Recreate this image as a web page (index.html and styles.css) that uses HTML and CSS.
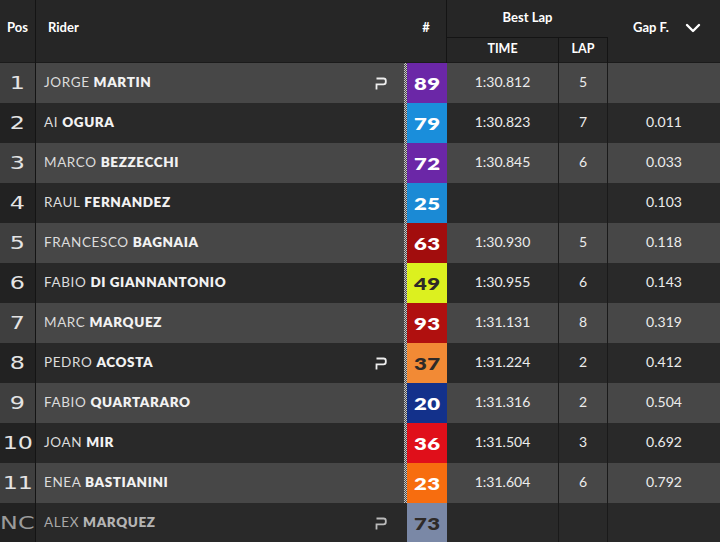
FILE: index.html
```html
<!DOCTYPE html>
<html>
<head>
<meta charset="utf-8">
<link rel="stylesheet" href="styles.css">
</head>
<body>
<div class="board">
  <div class="head">
    <div class="h-pos">Pos</div>
    <div class="h-rider">Rider</div>
    <div class="h-num">#</div>
    <div class="h-best">Best Lap</div>
    <div class="h-time">TIME</div>
    <div class="h-lap">LAP</div>
    <div class="h-gap">Gap F.
      <svg class="chev" width="16" height="10" viewBox="0 0 16 10"><path d="M2 2 L8 8 L14 2" fill="none" stroke="#fff" stroke-width="2.4" stroke-linecap="round" stroke-linejoin="round"/></svg>
    </div>
  </div>

  <div class="row light">
    <div class="pos"><span>1</span></div>
    <div class="rider">JORGE <b>MARTIN</b><svg class="pflag" width="12" height="13" viewBox="0 0 12 13"><path d="M1.5 1.5 H8.5 Q10.8 1.5 10.8 3.8 V5 Q10.8 7.3 8.5 7.3 H1.5 V12.5" fill="none" stroke="#eee" stroke-width="1.8"/></svg></div>
    <div class="chk"></div>
    <div class="num" style="background:#6b27a7"><span>89</span></div>
    <div class="time">1:30.812</div>
    <div class="lap">5</div>
    <div class="gap"></div>
  </div>
  <div class="row dark">
    <div class="pos"><span>2</span></div>
    <div class="rider">AI <b>OGURA</b></div>
    <div class="chk"></div>
    <div class="num" style="background:#1a8edb"><span>79</span></div>
    <div class="time">1:30.823</div>
    <div class="lap">7</div>
    <div class="gap">0.011</div>
  </div>
  <div class="row light">
    <div class="pos"><span>3</span></div>
    <div class="rider">MARCO <b>BEZZECCHI</b></div>
    <div class="chk"></div>
    <div class="num" style="background:#6b27a7"><span>72</span></div>
    <div class="time">1:30.845</div>
    <div class="lap">6</div>
    <div class="gap">0.033</div>
  </div>
  <div class="row dark">
    <div class="pos"><span>4</span></div>
    <div class="rider">RAUL <b>FERNANDEZ</b></div>
    <div class="chk"></div>
    <div class="num" style="background:#1b8ad5"><span>25</span></div>
    <div class="time"></div>
    <div class="lap"></div>
    <div class="gap">0.103</div>
  </div>
  <div class="row light">
    <div class="pos"><span>5</span></div>
    <div class="rider">FRANCESCO <b>BAGNAIA</b></div>
    <div class="chk"></div>
    <div class="num" style="background:#a20d0d"><span>63</span></div>
    <div class="time">1:30.930</div>
    <div class="lap">5</div>
    <div class="gap">0.118</div>
  </div>
  <div class="row dark">
    <div class="pos"><span>6</span></div>
    <div class="rider">FABIO <b>DI GIANNANTONIO</b></div>
    <div class="chk"></div>
    <div class="num dk" style="background:#dcf01f"><span>49</span></div>
    <div class="time">1:30.955</div>
    <div class="lap">6</div>
    <div class="gap">0.143</div>
  </div>
  <div class="row light">
    <div class="pos"><span>7</span></div>
    <div class="rider">MARC <b>MARQUEZ</b></div>
    <div class="chk"></div>
    <div class="num" style="background:#b0100f"><span>93</span></div>
    <div class="time">1:31.131</div>
    <div class="lap">8</div>
    <div class="gap">0.319</div>
  </div>
  <div class="row dark">
    <div class="pos"><span>8</span></div>
    <div class="rider">PEDRO <b>ACOSTA</b><svg class="pflag" width="12" height="13" viewBox="0 0 12 13"><path d="M1.5 1.5 H8.5 Q10.8 1.5 10.8 3.8 V5 Q10.8 7.3 8.5 7.3 H1.5 V12.5" fill="none" stroke="#eee" stroke-width="1.8"/></svg></div>
    <div class="chk"></div>
    <div class="num dk" style="background:#f28a35"><span>37</span></div>
    <div class="time">1:31.224</div>
    <div class="lap">2</div>
    <div class="gap">0.412</div>
  </div>
  <div class="row light">
    <div class="pos"><span>9</span></div>
    <div class="rider">FABIO <b>QUARTARARO</b></div>
    <div class="chk"></div>
    <div class="num" style="background:#13318b"><span>20</span></div>
    <div class="time">1:31.316</div>
    <div class="lap">2</div>
    <div class="gap">0.504</div>
  </div>
  <div class="row dark">
    <div class="pos"><span>10</span></div>
    <div class="rider">JOAN <b>MIR</b></div>
    <div class="chk"></div>
    <div class="num" style="background:#e00f1a"><span>36</span></div>
    <div class="time">1:31.504</div>
    <div class="lap">3</div>
    <div class="gap">0.692</div>
  </div>
  <div class="row light">
    <div class="pos"><span>11</span></div>
    <div class="rider">ENEA <b>BASTIANINI</b></div>
    <div class="chk"></div>
    <div class="num" style="background:#f76d0f"><span>23</span></div>
    <div class="time">1:31.604</div>
    <div class="lap">6</div>
    <div class="gap">0.792</div>
  </div>
  <div class="row dark nc">
    <div class="pos"><span>NC</span></div>
    <div class="rider">ALEX <b>MARQUEZ</b><svg class="pflag" width="12" height="13" viewBox="0 0 12 13"><path d="M1.5 1.5 H8.5 Q10.8 1.5 10.8 3.8 V5 Q10.8 7.3 8.5 7.3 H1.5 V12.5" fill="none" stroke="#bbb" stroke-width="1.8"/></svg></div>
    <div class="chk none"></div>
    <div class="num dk" style="background:#7a88a6"><span>73</span></div>
    <div class="time"></div>
    <div class="lap"></div>
    <div class="gap"></div>
  </div>
</div>
</body>
</html>
```

FILE: styles.css
```css
* { box-sizing: border-box; }
html, body { margin: 0; padding: 0; }
body {
  background: #262626;
  width: 720px;
  height: 542px;
  overflow: hidden;
  font-family: "Lato", "Open Sans", sans-serif;
  color: #e8e8e8;
}
.board { width: 720px; }

.head {
  display: grid;
  grid-template-columns: 36px 368px 43px 112px 49px 112px;
  grid-template-rows: 38px 25px;
  background: #262626;
  font-weight: 700;
  font-size: 13px;
  color: #fff;
  border-bottom: 1px solid #1b1b1b;
  height: 63px;
}
.h-pos, .h-rider, .h-num, .h-gap {
  grid-row: 1 / 3;
  display: flex;
  align-items: center;
  padding-bottom: 9px;
}
.h-pos { grid-column: 1; padding-left: 7px; border-right: 1px solid #141414; }
.h-rider { grid-column: 2; padding-left: 12px; }
.h-num { grid-column: 3; justify-content: center; padding-left: 2px; border-right: 1px solid #141414; }
.h-best {
  grid-column: 4 / 6; grid-row: 1;
  display: flex; align-items: center; justify-content: center;
  padding-bottom: 4px;
  border-bottom: 1px solid #141414;
}
.h-time, .h-lap {
  grid-row: 2;
  display: flex; align-items: center; justify-content: center;
  padding-bottom: 5px;
  font-size: 12.5px;
}
.h-time { grid-column: 4; border-right: 1px solid #141414; }
.h-lap { grid-column: 5; border-right: 1px solid #141414; }
.h-gap { grid-column: 6; padding-left: 25px; }
.chev { margin-left: 16px; margin-top: 2px; }

.row {
  display: grid;
  grid-template-columns: 36px 368px 3px 40px 112px 49px 112px;
  height: 40px;
}
.row > div { display: flex; align-items: center; }
.light { background: #474747; }
.dark { background: #292929; }
.light .pos { background: #3f3f3f; }
.dark .pos { background: #222222; }

.pos {
  border-right: 1px solid #141414;
  justify-content: center;
  font-family: "DejaVu Sans", sans-serif;
  font-weight: 400;
  font-size: 17px;
  color: #e4e4e4;
}
.pos span { display: inline-block; transform: scaleX(1.4); }

.rider {
  padding-left: 8px;
  padding-bottom: 3px;
  font-size: 13.5px;
  letter-spacing: 0.6px;
  color: #dcdcdc;
  white-space: pre;
}
.rider b { font-weight: 800; color: #f2f2f2; }
.pflag { margin-left: auto; margin-right: 17px; margin-top: 4px; }

.chk {
  background-color: #555;
  background-image: repeating-conic-gradient(#c8c8c8 0 25%, #4a4a4a 0 50%);
  background-size: 2px 2px;
}
.chk.none { background: transparent; }

.num {
  justify-content: center;
  font-family: "Lato", sans-serif;
  font-weight: 800;
  font-size: 17px;
  color: #fff;
}
.num span { display: inline-block; transform: scaleX(1.3); letter-spacing: 0.5px; }
.num.dk { color: #2e2a28; }

.time, .lap, .gap {
  justify-content: center;
  padding-bottom: 3px;
  font-size: 14px;
  color: #ececec;
}
.time { border-right: 1px solid #1a1a1a; }
.lap { border-right: 1px solid #1a1a1a; }

.nc .pos { color: #9a9a9a; }
.nc .rider { color: #a8a8a8; }
.nc .rider b { color: #b4b4b4; }
```
